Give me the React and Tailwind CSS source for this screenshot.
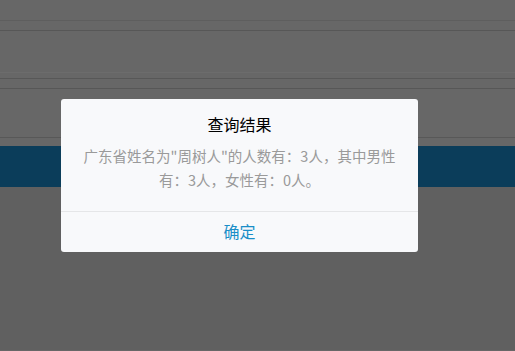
export default function App() {
  return (
    <div
      className="relative h-[351px] w-[515px] overflow-hidden bg-[#676767]"
      style={{ fontFamily: '"Noto Sans CJK SC", "Noto Sans", sans-serif' }}
    >
      {/* dimmed page behind the dialog */}
      <div className="h-[21px] border-b border-[#5e5e5e]" />
      <div className="h-[10px] border-b border-[#575757]" />
      <div className="h-[42px] border-b border-[#6c6c6c]" />
      <div className="h-[6px] border-b border-[#575757]" />
      <div className="h-[10px] border-b border-[#575757]" />
      <div className="h-[49px] border-b border-[#585858]" />
      <div className="h-[8px]" />
      <div className="h-[41px] bg-[#0b3d5a]" />
      <div className="h-[163px] bg-[#606060]" />

      {/* dialog */}
      <div className="absolute left-[61px] top-[99px] w-[357px] rounded-[3px] bg-[#f8f9fb]">
        <div className="px-[19px] pt-[14px] pb-[19px] text-center">
          <div className="text-[16px] leading-[22px] text-black">查询结果</div>
          <div className="mt-[9px] text-[14.5px] leading-[24px] text-[#9a9a9a]">
            广东省姓名为"周树人"的人数有：3人，其中男性有：3人，女性有：0人。
          </div>
        </div>
        <div className="flex h-[41px] items-center justify-center border-t border-[#e5e6e8] pb-[3px] text-[16px] text-[#1a8ec8]">
          确定
        </div>
      </div>
    </div>
  );
}
